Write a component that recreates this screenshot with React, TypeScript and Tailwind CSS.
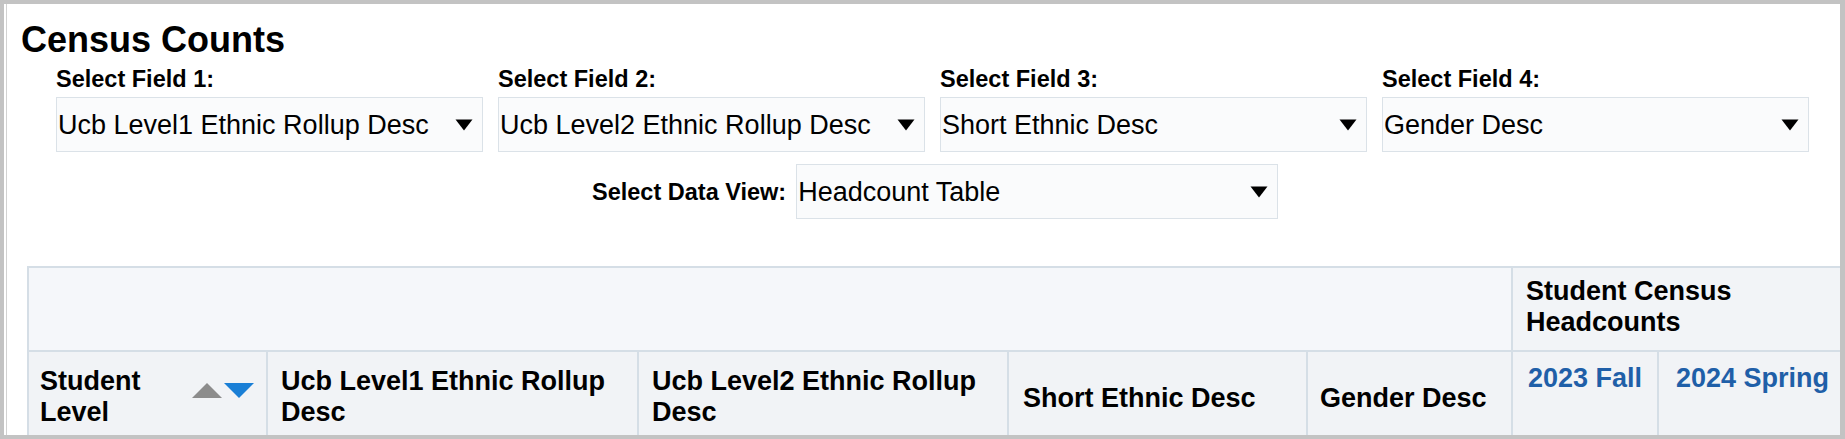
import React from "react";

const FONT = { fontFamily: '"Liberation Sans", Arial, Helvetica, sans-serif' };

function Caret() {
  return (
    <svg width="18" height="12" viewBox="0 0 18 12" className="shrink-0">
      <path d="M0.5 0.5H17.5L9 11.5Z" fill="#000" />
    </svg>
  );
}

function SelectBox({ value, width }: { value: string; width: string }) {
  return (
    <div
      className={`flex h-[55px] items-center justify-between border border-[#dbe2e8] bg-[#fafbfc] pl-[1px] pr-[9px] ${width}`}
    >
      <span className="whitespace-nowrap pt-[1px] text-[27px] leading-[31px] text-black">{value}</span>
      <Caret />
    </div>
  );
}

const fields = [
  { label: "Select Field 1:", value: "Ucb Level1 Ethnic Rollup Desc" },
  { label: "Select Field 2:", value: "Ucb Level2 Ethnic Rollup Desc" },
  { label: "Select Field 3:", value: "Short Ethnic Desc" },
  { label: "Select Field 4:", value: "Gender Desc" },
];

export default function App() {
  return (
    <div
      className="h-[439px] w-[1845px] overflow-hidden bg-[#c3c3c3] pb-[4px] pl-[4px] pr-[5px] pt-[4px]"
      style={FONT}
    >
      <div className="flex h-full bg-white pl-[2px]">
        <div className="h-full flex-1 overflow-hidden border-l border-[#d2d2d2] pt-[15px]">
          {/* Title */}
          <h1 className="pl-[14px] text-[36px] font-bold leading-[41px] text-black">Census Counts</h1>

          {/* Field prompts */}
          <div className="mt-[6px] flex gap-[15px] pl-[49px]">
            {fields.map((f) => (
              <div key={f.label} className="flex w-[427px] flex-col">
                <div className="whitespace-nowrap text-[23.5px] font-bold leading-[27px] text-black">{f.label}</div>
                <div className="mt-[4px]">
                  <SelectBox value={f.value} width="w-[427px]" />
                </div>
              </div>
            ))}
          </div>

          {/* Data view prompt */}
          <div className="mt-[12px] flex items-center pl-[585px]">
            <div className="mr-[10px] whitespace-nowrap pt-[2px] text-[23.5px] font-bold leading-[27px] text-black">
              Select Data View:
            </div>
            <SelectBox value="Headcount Table" width="w-[482px]" />
          </div>

          {/* Table */}
          <div className="ml-[20px] mt-[47px] grid w-[1821px] shrink-0 grid-cols-[239px_371px_370px_299px_205px_146px_189px] border-l-2 border-t-2 border-[#d5dee6] text-[27px] font-bold leading-[31px] text-black">
            <div className="col-span-5 h-[84px] border-b-2 border-r-2 border-[#d5dee6] bg-[#f5f7fa]" />
            <div className="col-span-2 h-[84px] border-b-2 border-r-2 border-[#d5dee6] bg-[#f2f4f7] pl-[13px] pt-[8px]">
              Student Census
              <br />
              Headcounts
            </div>

            <div className="flex h-[90px] items-center justify-between border-r-2 border-[#d5dee6] bg-[#f1f3f6] pl-[11px] pr-[12px]">
              <div>
                Student
                <br />
                Level
              </div>
              <div className="mb-[13px] flex items-center gap-[2px]">
                <svg width="30" height="15" viewBox="0 0 30 15">
                  <path d="M0 15L15 0L30 15Z" fill="#8c8c8c" />
                </svg>
                <svg width="30" height="15" viewBox="0 0 30 15">
                  <path d="M0 0H30L15 15Z" fill="#1a7fd6" />
                </svg>
              </div>
            </div>
            <div className="flex h-[90px] items-center border-r-2 border-[#d5dee6] bg-[#f1f3f6] pl-[13px]">
              <div>
                Ucb Level1 Ethnic Rollup
                <br />
                Desc
              </div>
            </div>
            <div className="flex h-[90px] items-center border-r-2 border-[#d5dee6] bg-[#f1f3f6] pl-[13px]">
              <div>
                Ucb Level2 Ethnic Rollup
                <br />
                Desc
              </div>
            </div>
            <div className="flex h-[90px] items-center border-r-2 border-[#d5dee6] bg-[#f1f3f6] pl-[14px] pt-[2px]">
              Short Ethnic Desc
            </div>
            <div className="flex h-[90px] items-center border-r-2 border-[#d5dee6] bg-[#f1f3f6] pl-[12px] pt-[2px]">
              Gender Desc
            </div>
            <div className="flex h-[90px] items-start justify-center border-r-2 border-[#d5dee6] bg-[#f1f3f6] pt-[11px] text-[#1f5fa8]">
              2023 Fall
            </div>
            <div className="flex h-[90px] items-start justify-center border-r-2 border-[#d5dee6] bg-[#f1f3f6] pt-[11px] text-[#1f5fa8]">
              2024 Spring
            </div>
          </div>
        </div>
      </div>
    </div>
  );
}
